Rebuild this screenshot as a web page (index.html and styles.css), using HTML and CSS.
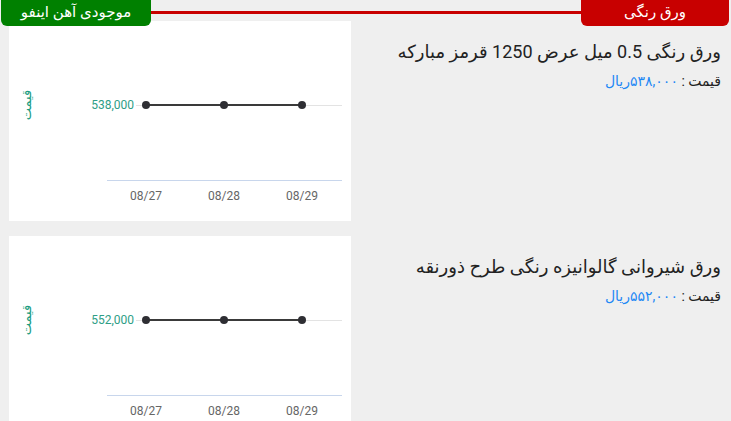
FILE: index.html
```html
<!DOCTYPE html>
<html lang="fa" dir="rtl">
<head>
    <meta charset="UTF-8">
    <meta name="viewport" content="width=device-width, initial-scale=1.0">
    <title>ورق رنگی</title>
    <link rel="stylesheet" href="styles.css">
</head>
<body>

    <div class="top-bar">
        <div class="tab tab-red">ورق رنگی</div>
        <div class="bar-line"></div>
        <div class="tab tab-green">موجودی آهن اینفو</div>
    </div>

    <div class="product-row">
        <div class="product-info">
            <div class="product-title">ورق رنگی 0.5 میل عرض 1250 قرمز مبارکه</div>
            <div class="product-price">قیمت : <span class="price-value">۵۳۸,۰۰۰ریال</span></div>
        </div>
        <div class="chart-card">
            <svg class="chart" width="342" height="200" viewBox="0 0 342 200">
                <text class="axis-title" transform="translate(22 84) rotate(-90)">قیمت</text>
                <line class="grid" x1="127" y1="84.5" x2="333" y2="84.5"/>
                <text class="value-label" x="125" y="88">538,000</text>
                <line class="x-axis" x1="98" y1="159.5" x2="333" y2="159.5"/>
                <polyline class="series" points="137,84 215,84 293,84"/>
                <circle class="dot" cx="137" cy="84" r="4"/>
                <circle class="dot" cx="215" cy="84" r="4"/>
                <circle class="dot" cx="293" cy="84" r="4"/>
                <text class="date-label" x="137" y="179">08/27</text>
                <text class="date-label" x="215" y="179">08/28</text>
                <text class="date-label" x="293" y="179">08/29</text>
            </svg>
        </div>
    </div>

    <div class="product-row">
        <div class="product-info">
            <div class="product-title">ورق شیروانی گالوانیزه رنگی طرح ذورنقه</div>
            <div class="product-price">قیمت : <span class="price-value">۵۵۲,۰۰۰ریال</span></div>
        </div>
        <div class="chart-card">
            <svg class="chart" width="342" height="200" viewBox="0 0 342 200">
                <text class="axis-title" transform="translate(22 84) rotate(-90)">قیمت</text>
                <line class="grid" x1="127" y1="84.5" x2="333" y2="84.5"/>
                <text class="value-label" x="125" y="88">552,000</text>
                <line class="x-axis" x1="98" y1="159.5" x2="333" y2="159.5"/>
                <polyline class="series" points="137,84 215,84 293,84"/>
                <circle class="dot" cx="137" cy="84" r="4"/>
                <circle class="dot" cx="215" cy="84" r="4"/>
                <circle class="dot" cx="293" cy="84" r="4"/>
                <text class="date-label" x="137" y="179">08/27</text>
                <text class="date-label" x="215" y="179">08/28</text>
                <text class="date-label" x="293" y="179">08/29</text>
            </svg>
        </div>
    </div>

</body>
</html>
```

FILE: styles.css
```css
body {
    margin: 0;
    padding: 0 2px 0 1px;
    background-color: #efefef;
    font-family: Roboto, "DejaVu Sans", sans-serif;
    color: #222;
    overflow: hidden;
}
.top-bar {
    display: flex;
    align-items: flex-start;
    height: 26px;
    margin-bottom: -5px;
    position: relative;
    z-index: 1;
}
.tab {
    height: 26px;
    line-height: 24px;
    color: white;
    font-size: 15px;
    text-align: center;
    border-radius: 0 0 6px 6px;
}
.tab-red {
    width: 148px;
    background: #c80000;
}
.tab-green {
    width: 150px;
    background: #008000;
}
.bar-line {
    flex: 1;
    height: 3px;
    margin-top: 11px;
    background: #c80000;
}
.product-row {
    display: flex;
    justify-content: space-between;
    padding: 0 8px 0 8px;
    margin-bottom: 15px;
}
.product-info {
    padding-top: 19px;
}
.product-title {
    font-size: 18px;
    line-height: 24px;
    color: #222;
}
.product-price {
    font-size: 14px;
    line-height: 20px;
    margin-top: 7px;
    color: #222;
}
.price-value {
    color: #1e88f5;
}
.chart-card {
    width: 342px;
    height: 200px;
    background: white;
}
.chart {
    display: block;
    direction: ltr;
    font-family: Roboto, "DejaVu Sans", sans-serif;
}
.axis-title {
    fill: #1a9c80;
    font-size: 13px;
    text-anchor: middle;
}
.value-label {
    fill: #2e9e86;
    font-size: 12px;
    text-anchor: end;
}
.grid {
    stroke: #e3e3e3;
    stroke-width: 1;
}
.x-axis {
    stroke: #c8d6ec;
    stroke-width: 1;
}
.series {
    fill: none;
    stroke: #3a3a3a;
    stroke-width: 2;
}
.dot {
    fill: #2e2e33;
}
.date-label {
    fill: #666;
    font-size: 12px;
    text-anchor: middle;
}
```
